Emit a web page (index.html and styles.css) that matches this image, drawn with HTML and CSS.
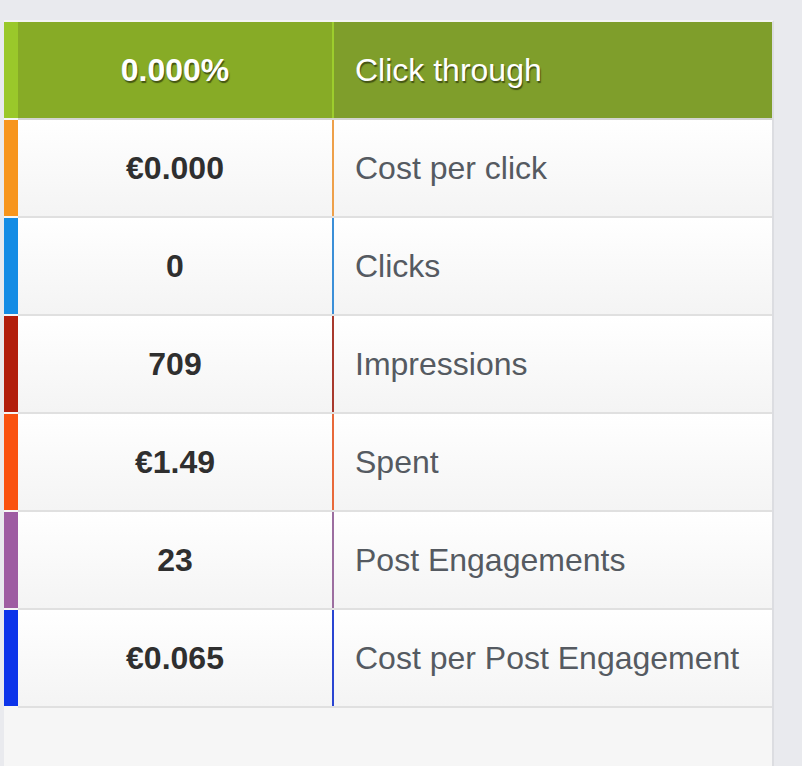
FILE: index.html
```html
<!DOCTYPE html>
<html>
<head>
<meta charset="utf-8">
<link rel="stylesheet" href="styles.css">
</head>
<body>
<div class="panel">
  <div class="row head">
    <div class="strip s-head"></div>
    <div class="cells">
      <div class="val">0.000%</div>
      <div class="div d-head"></div>
      <div class="lbl">Click through</div>
    </div>
  </div>
  <div class="row">
    <div class="strip s-orange"></div>
    <div class="cells">
      <div class="val">€0.000</div>
      <div class="div s-orange"></div>
      <div class="lbl">Cost per click</div>
    </div>
  </div>
  <div class="row">
    <div class="strip s-blue"></div>
    <div class="cells">
      <div class="val">0</div>
      <div class="div s-blue"></div>
      <div class="lbl">Clicks</div>
    </div>
  </div>
  <div class="row">
    <div class="strip s-red"></div>
    <div class="cells">
      <div class="val">709</div>
      <div class="div s-red"></div>
      <div class="lbl">Impressions</div>
    </div>
  </div>
  <div class="row">
    <div class="strip s-flame"></div>
    <div class="cells">
      <div class="val">€1.49</div>
      <div class="div s-flame"></div>
      <div class="lbl">Spent</div>
    </div>
  </div>
  <div class="row">
    <div class="strip s-purple"></div>
    <div class="cells">
      <div class="val">23</div>
      <div class="div s-purple"></div>
      <div class="lbl">Post Engagements</div>
    </div>
  </div>
  <div class="row">
    <div class="strip s-royal"></div>
    <div class="cells">
      <div class="val">€0.065</div>
      <div class="div s-royal"></div>
      <div class="lbl">Cost per Post Engagement</div>
    </div>
  </div>
</div>
</body>
</html>
```

FILE: styles.css
```css
html, body {
  margin: 0;
  padding: 0;
  background: #e9eaee;
  font-family: "Liberation Sans", Arial, sans-serif;
}
.panel {
  margin: 20px 0 0 4px;
  width: 768px;
  min-height: 746px;
  box-sizing: border-box;
  border-top: 2px solid #f4f4f4;
  border-right: 2px solid #dcdde1;
  background: #f6f6f6;
  width: 770px;
}
.row {
  display: flex;
  height: 98px;
}
.strip {
  width: 14px;
  height: 96px;
  flex: none;
}
.cells {
  flex: 1;
  display: flex;
  height: 96px;
  border-bottom: 2px solid #e0e0e0;
  background: linear-gradient(#ffffff, #f4f4f4);
}
.val {
  width: 314px;
  display: flex;
  align-items: center;
  justify-content: center;
  font-size: 32px;
  font-weight: bold;
  color: #2f2f2f;
}
.div {
  width: 2px;
  flex: none;
}
.lbl {
  flex: 1;
  display: flex;
  align-items: center;
  padding-left: 21px;
  font-size: 32px;
  color: #555a61;
}
.head .cells {
  background: #7f9e2b;
  border-bottom-color: #d3d4d0;
}
.head .val {
  background: #87ab26;
  color: #fff;
  text-shadow: 1px 2px 1px rgba(40, 50, 10, 0.7);
}
.head .lbl {
  color: #fff;
  text-shadow: 1px 2px 1px rgba(40, 50, 10, 0.7);
}
.head .strip { height: 96px; }
.s-head { background: #9ac82a; }
.d-head { background: #9dcd2d; }
.s-orange { background: #f7951d; }
.s-blue { background: #148ce5; }
.s-red { background: #b21e0c; }
.s-flame { background: #fa5210; }
.s-purple { background: #9e5ca2; }
.s-royal { background: #0c34ea; }
.div.s-orange { background: #eea04a; }
.div.s-blue { background: #3b8fd8; }
.div.s-red { background: #a8392d; }
.div.s-flame { background: #e8693a; }
.div.s-purple { background: #9c6ea0; }
.div.s-royal { background: #2a45d2; }
```
